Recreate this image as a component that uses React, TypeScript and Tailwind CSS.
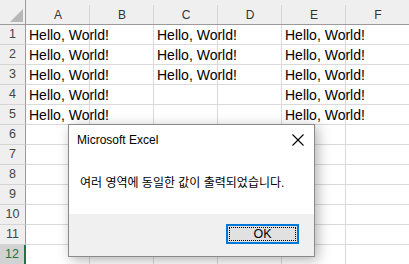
const COLS = ["A", "B", "C", "D", "E", "F"];

// which cells hold the text, per row (column index)
const FILLED: Record<number, number[]> = {
  1: [0, 2, 4],
  2: [0, 2, 4],
  3: [0, 2, 4],
  4: [0, 4],
  5: [0, 4],
};

const ROWS = Array.from({ length: 12 }, (_, i) => i + 1);

function Corner() {
  return (
    <div className="relative bg-[#efefef] border-r border-b border-[#9b9b9b]">
      <svg className="absolute left-[10px] top-[9px]" width="14" height="14" viewBox="0 0 14 14">
        <polygon points="13,0 13,13 0,13" fill="#b7b7b7" />
      </svg>
    </div>
  );
}

function CloseIcon() {
  return (
    <svg width="12" height="12" viewBox="0 0 12 12" className="text-black">
      <path d="M0.5 0.5 L11.5 11.5 M11.5 0.5 L0.5 11.5" stroke="currentColor" strokeWidth="1.1" fill="none" />
    </svg>
  );
}

export default function App() {
  return (
    <div
      className="relative w-[409px] h-[264px] overflow-hidden bg-white"
      style={{ fontFamily: '"Liberation Sans", Arial, sans-serif' }}
    >
      <div className="grid grid-cols-[26px_repeat(6,64px)] grid-rows-[25px_repeat(12,20px)]">
        <Corner />
        {COLS.map((c) => (
          <div
            key={c}
            className="relative flex items-center justify-center pt-[5px] bg-[#efefef] border-b border-[#9b9b9b] text-[12px] text-[#333] after:absolute after:right-0 after:top-[5px] after:bottom-0 after:w-px after:bg-[#d4d4d4]"
          >
            {c}
          </div>
        ))}

        {ROWS.map((r) => {
          const selected = r === 12;
          return [
            <div
              key={`h${r}`}
              className={
                selected
                  ? "flex items-center justify-center bg-[#d2d2d2] border-b border-[#c6c6c6] border-r-2 border-r-[#217346] text-[12.5px] text-[#217346]"
                  : "flex items-center justify-center bg-[#efefef] border-b border-[#d4d4d4] border-r border-r-[#9b9b9b] text-[12.5px] text-[#444]"
              }
            >
              {r}
            </div>,
            ...COLS.map((c, ci) => (
              <div
                key={`${c}${r}`}
                className="relative border-r border-b border-[#dadada] overflow-visible"
              >
                {FILLED[r]?.includes(ci) && (
                  <span className="absolute left-[3px] bottom-[2px] whitespace-nowrap text-[14px] leading-none text-black">
                    Hello, World!
                  </span>
                )}
              </div>
            )),
          ];
        })}
      </div>

      {/* message box */}
      <div className="absolute left-[68px] top-[124px] w-[247px] h-[133px] flex flex-col bg-white border border-[#8a8a8a] shadow-[3px_3px_12px_rgba(0,0,0,0.3)]">
        <div className="flex items-center justify-between h-[28px] pl-[8px] pr-[10px] pt-[2px]">
          <span className="text-[12px] text-black">Microsoft Excel</span>
          <CloseIcon />
        </div>
        <div
          className="flex-1 flex items-center pl-[11px] pb-[2px] text-[12px] text-black"
          style={{ fontFamily: '"Liberation Sans", "Noto Sans CJK KR", sans-serif' }}
        >
          여러 영역에 동일한 값이 출력되었습니다.
        </div>
        <div className="h-[42px] flex items-start justify-end bg-[#f0f0f0] pt-[10px] pr-[15px]">
          <div className="w-[73px] h-[20px] border-2 border-[#0078d7] bg-[#e1e1e1] p-px">
            <div className="w-full h-full border border-dotted border-black flex items-center justify-center text-[12.5px] text-black">
              OK
            </div>
          </div>
        </div>
      </div>
    </div>
  );
}
